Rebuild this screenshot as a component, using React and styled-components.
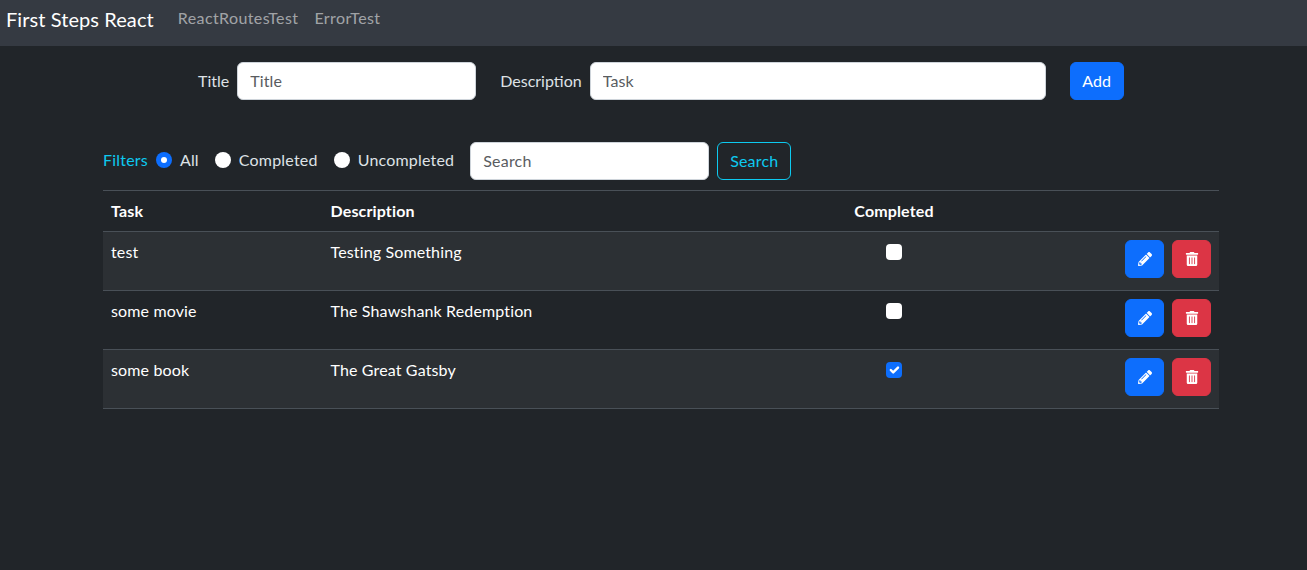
import React from "react";
import styled, { createGlobalStyle } from "styled-components";
import { FaPencilAlt, FaTrashAlt } from "react-icons/fa";

const Global = createGlobalStyle`
  * { box-sizing: border-box; }
  html, body { margin: 0; padding: 0; }
  body {
    background: #212529;
    color: #dee2e6;
    font-family: "Lato", sans-serif;
    font-size: 16px;
    line-height: 24px;
    letter-spacing: 0.14px;
    height: 570px;
    overflow: hidden;
  }
`;

const Navbar = styled.nav`
  height: 46px;
  display: flex;
  align-items: flex-start;
  padding-left: 6px;
  background: #353a42;
`;
const Brand = styled.a`
  font-size: 20px;
  line-height: 30px;
  padding-top: 4px;
  color: #fff;
  margin-right: 24px;
  letter-spacing: 0.08px;
`;
const NavLink = styled.a`
  color: rgba(255, 255, 255, 0.55);
  line-height: 24px;
  letter-spacing: 0.4px;
  padding-top: 6px;
  margin-right: 16px;
`;
const FormRow = styled.form`
  display: flex;
  align-items: center;
  margin: 16px 0 0 198px;
  height: 38px;
`;
const Label = styled.label`
  margin-right: 8px;
  color: #dee2e6;
  letter-spacing: 0;
`;
const Input = styled.input`
  width: ${(p) => p.$w}px;
  height: 38px;
  padding: 5px 12px 7px;
  font: inherit;
  letter-spacing: inherit;
  color: #212529;
  background: #fff;
  border: 1px solid #ced4da;
  border-radius: 6px;
  margin-right: ${(p) => p.$mr}px;
  &::placeholder { color: #595c5f; opacity: 1; }
`;
const AddButton = styled.button`
  width: 54px;
  height: 38px;
  padding: 0;
  font: inherit;
  letter-spacing: inherit;
  color: #fff;
  background: #0d6efd;
  border: 1px solid #0d6efd;
  border-radius: 6px;
`;
const Content = styled.main`
  width: 1116px;
  margin: 42px 0 0 103px;
`;
const FilterRow = styled.div`
  display: flex;
  align-items: center;
  height: 38px;
  margin-bottom: 10px;
  letter-spacing: 0.2px;
`;
const FilterTitle = styled.span`
  color: #0dcaf0;
  margin: 0 8px 2px 0;
`;
const Radio = styled.span`
  width: 16px;
  height: 16px;
  border-radius: 50%;
  margin: 0 8px 2px 0;
  flex: none;
  background: ${(p) => (p.$checked ? "#0d6efd" : "#fff")};
  display: flex;
  align-items: center;
  justify-content: center;
  &::after {
    content: "";
    display: ${(p) => (p.$checked ? "block" : "none")};
    width: 6px;
    height: 6px;
    border-radius: 50%;
    background: #fff;
  }
`;
const RadioLabel = styled.span`
  margin: 0 16px 2px 0;
`;
const SearchButton = styled.button`
  width: 74px;
  height: 38px;
  padding: 0;
  font: inherit;
  letter-spacing: inherit;
  color: #0dcaf0;
  background: transparent;
  border: 1px solid #0dcaf0;
  border-radius: 6px;
`;
const Table = styled.table`
  width: 100%;
  border-collapse: collapse;
  table-layout: fixed;
  color: #fff;
`;
const HeadCell = styled.th`
  text-align: ${(p) => p.$align || "left"};
  width: ${(p) => p.$w}px;
  font-weight: 700;
  padding: 8px;
  height: 41px;
  border-top: 1px solid #495057;
  border-bottom: 1px solid #495057;
`;
const Row = styled.tr`
  background: ${(p) => (p.$striped ? "#2c3034" : "transparent")};
`;
const Cell = styled.td`
  vertical-align: top;
  padding: 8px;
  height: 59px;
  border-bottom: 1px solid #495057;
  text-align: ${(p) => p.$align || "left"};
`;
const Check = styled.span`
  display: inline-flex;
  align-items: center;
  justify-content: center;
  width: 16px;
  height: 16px;
  margin-top: 4px;
  vertical-align: top;
  border-radius: 4px;
  background: ${(p) => (p.$checked ? "#0d6efd" : "#fff")};
`;
const Actions = styled.div`
  display: flex;
  justify-content: flex-end;
  gap: 8px;
`;
const IconButton = styled.button`
  width: 39px;
  height: 38px;
  display: flex;
  align-items: center;
  justify-content: center;
  padding: 0;
  color: #fff;
  font-size: 14px;
  border-radius: 6px;
  border: 1px solid ${(p) => p.$color};
  background: ${(p) => p.$color};
`;

const tasks = [
  { t: "test", d: "Testing Something", c: false },
  { t: "some movie", d: "The Shawshank Redemption", c: false },
  { t: "some book", d: "The Great Gatsby", c: true },
];

export default function App() {
  return (
    <>
      <Global />
      <Navbar>
        <Brand>First Steps React</Brand>
        <NavLink>ReactRoutesTest</NavLink>
        <NavLink>ErrorTest</NavLink>
      </Navbar>
      <FormRow>
        <Label>Title</Label>
        <Input $w={239} $mr={24} placeholder="Title" />
        <Label>Description</Label>
        <Input $w={456} $mr={24} placeholder="Task" />
        <AddButton type="button">Add</AddButton>
      </FormRow>
      <Content>
        <FilterRow>
          <FilterTitle>Filters</FilterTitle>
          <Radio $checked />
          <RadioLabel>All</RadioLabel>
          <Radio />
          <RadioLabel>Completed</RadioLabel>
          <Radio />
          <RadioLabel>Uncompleted</RadioLabel>
          <Input $w={239} $mr={8} placeholder="Search" />
          <SearchButton type="button">Search</SearchButton>
        </FilterRow>
        <Table>
          <thead>
            <tr>
              <HeadCell $w={219.5}>Task</HeadCell>
              <HeadCell $w={469}>Description</HeadCell>
              <HeadCell $w={205} $align="center">Completed</HeadCell>
              <HeadCell />
            </tr>
          </thead>
          <tbody>
            {tasks.map((x, i) => (
              <Row key={x.t} $striped={i % 2 === 0}>
                <Cell>{x.t}</Cell>
                <Cell>{x.d}</Cell>
                <Cell $align="center">
                  <Check $checked={x.c}>
                    {x.c && (
                      <svg width="16" height="16" viewBox="0 0 20 20">
                        <path fill="none" stroke="#fff" strokeLinecap="round" strokeLinejoin="round" strokeWidth="3" d="M6 10l3 3l6-6" />
                      </svg>
                    )}
                  </Check>
                </Cell>
                <Cell>
                  <Actions>
                    <IconButton $color="#0d6efd"><FaPencilAlt /></IconButton>
                    <IconButton $color="#dc3545"><FaTrashAlt /></IconButton>
                  </Actions>
                </Cell>
              </Row>
            ))}
          </tbody>
        </Table>
      </Content>
    </>
  );
}
